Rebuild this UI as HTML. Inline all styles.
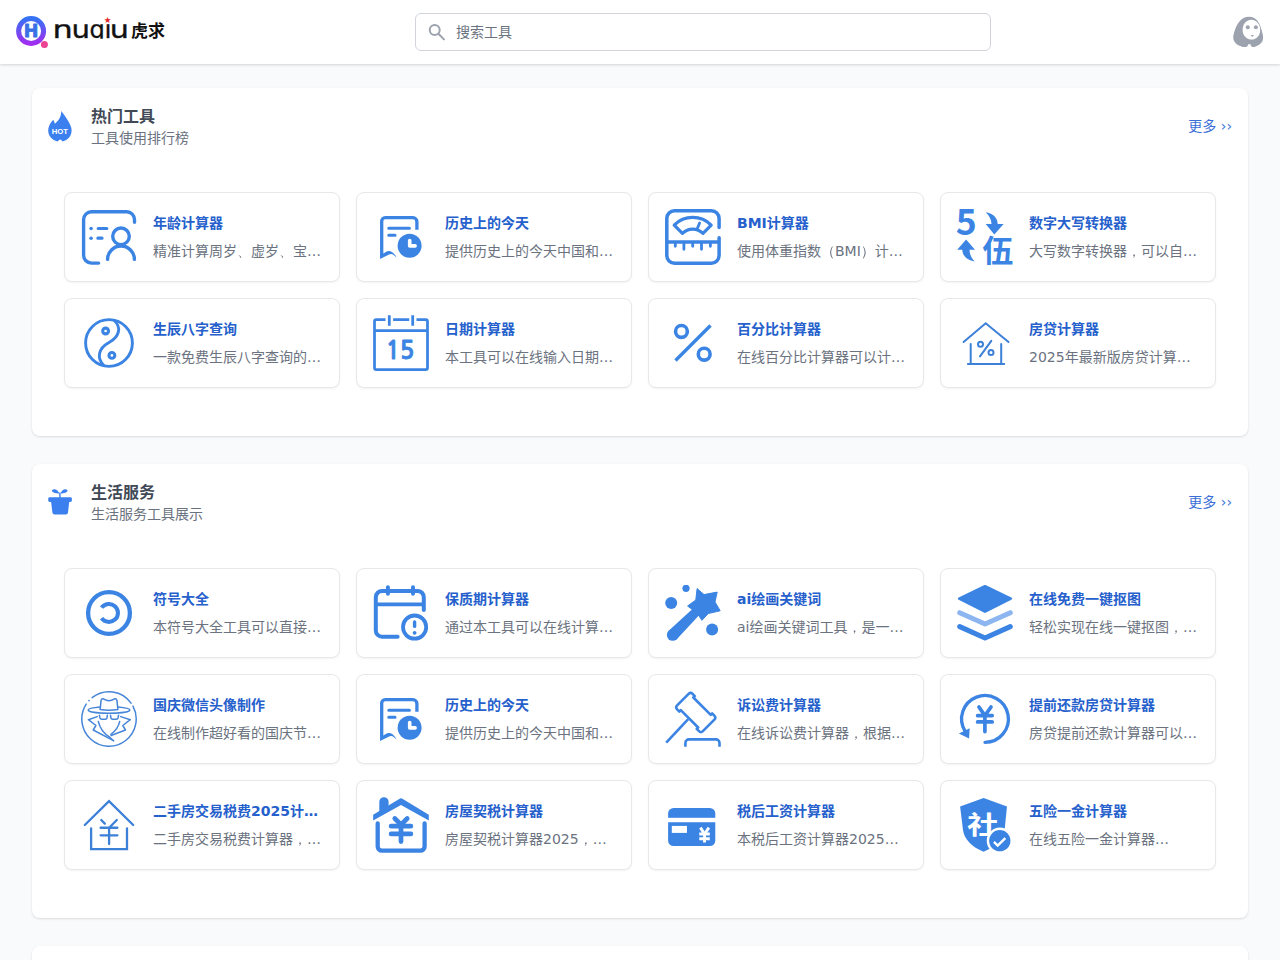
<!DOCTYPE html>
<html lang="zh-CN">
<head>
<meta charset="utf-8">
<title>虎求工具</title>
<style>
*{box-sizing:border-box;margin:0;padding:0}
html,body{width:1280px;height:960px;overflow:hidden}
body{background:#f9fafb;font-family:"DejaVu Sans","Noto Sans CJK SC",sans-serif;font-size:14px;color:#374151;position:relative}
header{position:absolute;left:0;top:0;width:1280px;height:64px;background:#fff;box-shadow:0 1px 3px rgba(0,0,0,.1),0 1px 2px rgba(0,0,0,.06);z-index:5}
.search{position:absolute;left:415px;top:13px;width:576px;height:38px;border:1px solid #d1d5db;border-radius:6px;background:#fff}
.hsvg{position:absolute;left:0;top:0}
.search span{position:absolute;left:40px;top:0;line-height:36px;font-size:14px;color:#6b7280}
.sec{position:absolute;left:32px;width:1216px;background:#fff;border-radius:8px;box-shadow:0 1px 3px rgba(0,0,0,.08),0 1px 2px rgba(0,0,0,.05)}
.hd{position:absolute;left:0;top:0;width:100%;height:76px}
.ov{position:absolute;left:0;top:0;pointer-events:none}
.ht{position:absolute;left:59px;top:16px}
.ht h2{font-size:16px;line-height:24px;font-weight:700;color:#414956;position:relative;top:1px}
.ht p{font-size:14px;line-height:20px;color:#6b7280}
.more{position:absolute;right:16px;top:28px;font-size:14px;line-height:20px;color:#3b6fd6}
.grid{position:absolute;left:32px;top:104px;width:1152px;display:grid;grid-template-columns:repeat(4,276px);gap:16px}
.card{display:block;position:relative;height:90px;border:1px solid #e7e8ea;border-radius:8px;background:#fff;box-shadow:0 1px 2px rgba(0,0,0,.05)}
.card .ic{position:absolute;left:16px;top:16px}
.card .tx{position:absolute;left:88px;top:20px;width:170px}
.card h3{font-size:14px;line-height:20px;font-weight:700;color:#2560cc;white-space:nowrap;overflow:hidden;text-overflow:ellipsis}
.card p{margin-top:8px;font-size:14px;line-height:20px;height:20px;color:#6b7280;white-space:nowrap;overflow:hidden;text-overflow:ellipsis}
.q{font-family:"WenQuanYi Zen Hei","Noto Sans CJK SC",sans-serif}
</style>
</head>
<body>
<header>
<div class="search"><span>搜索工具</span></div>
<svg class="hsvg" width="1280" height="64" viewBox="0 0 1280 64">
<defs>
<linearGradient id="lg" x1="0" y1="0" x2="0" y2="1"><stop offset="0" stop-color="#3572f4"/><stop offset="1" stop-color="#a02df0"/></linearGradient>
<clipPath id="lc"><rect x="50" y="24.2" width="80" height="14.6"/></clipPath>
</defs>
<circle cx="31.1" cy="31" r="12.5" fill="none" stroke="url(#lg)" stroke-width="5"/>
<circle cx="44.4" cy="44.4" r="3.5" fill="#ec4393"/>
<text x="31.0" y="37.3" text-anchor="middle" font-family="DejaVu Sans, sans-serif" font-weight="700" font-size="17.5" fill="#3b6fe6" stroke="#3b6fe6" stroke-width="0.8" stroke-linejoin="round">H</text>
<text clip-path="url(#lc)" y="38.1" font-family="DejaVu Sans, sans-serif" font-size="25.2" fill="#111" stroke="#111" stroke-width="0.35"><tspan x="52.4" textLength="20.29" lengthAdjust="spacingAndGlyphs">h</tspan><tspan x="71.4" textLength="18.53" lengthAdjust="spacingAndGlyphs">u</tspan><tspan x="89.6" textLength="15.36" lengthAdjust="spacingAndGlyphs">q</tspan><tspan x="104.4" textLength="7.01" lengthAdjust="spacingAndGlyphs">i</tspan><tspan x="109.8" textLength="19.17" lengthAdjust="spacingAndGlyphs">u</tspan></text>
<text x="107.7" y="23.2" text-anchor="middle" font-family="DejaVu Sans, sans-serif" font-size="8.6" fill="#e0261c">★</text>
<text x="131" y="37.3" font-family="Noto Sans CJK SC, sans-serif" font-weight="700" font-size="17" fill="#111">虎求</text>
<circle cx="434.7" cy="30.1" r="5" fill="none" stroke="#9ca3af" stroke-width="2"/>
<path d="M438.4 33.8 L444 39.4" stroke="#9ca3af" stroke-width="2" stroke-linecap="round"/>
<path d="M1249 16.8 C1241 16.8 1236.5 24 1234 33 C1231.5 40 1235 45 1243 46.9 C1246.5 47.4 1248 46.5 1248.2 44.2 L1250.6 44.2 C1250.8 46.5 1252 47.4 1254.5 46.9 C1261 45 1264.5 41 1262.6 34 C1260.5 24 1257 16.8 1249 16.8 Z" fill="#9ca3af"/>
<path d="M1251.3 19.8 C1257 19.8 1260.2 25 1260.2 30 C1260.2 35.5 1256.5 39.6 1251.6 39.6 C1246.5 39.6 1242.6 35.5 1242.6 30 C1242.6 25 1245.6 19.8 1251.3 19.8 Z" fill="#fff"/>
<circle cx="1247.8" cy="27.2" r="2" fill="#9ca3af"/><circle cx="1255.9" cy="27.2" r="2" fill="#9ca3af"/>
<path d="M1250.7 35 L1253.9 35 L1252.3 37 Z" fill="#9ca3af"/>
</svg>
</header>
<section class="sec" style="top:88px;height:348px">
<div class="hd"><div class="ht"><h2>热门工具</h2><p>工具使用排行榜</p></div><a class="more">更多 ››</a></div>
<div class="grid">
<a class="card"><svg class="ic" width="56" height="56" viewBox="0 0 56 56"><g fill="none" stroke="#3b84e3" stroke-width="3.4" stroke-linecap="round" stroke-linejoin="round">
<path d="M53.5 13.2 V10.6 A7.8 7.8 0 0 0 45.7 2.8 H10.4 A7.8 7.8 0 0 0 2.6 10.6 V46.3 A7.8 7.8 0 0 0 10.4 54.1 H17.6"/>
<path d="M17.2 19.5 H25.8 M16.9 29.2 H21" stroke-width="3.2"/>
<circle cx="40" cy="27.3" r="8.3"/>
<path d="M26.6 50.4 A13.4 13.4 0 0 1 53.4 50.4"/>
</g><circle cx="10.1" cy="19.5" r="1.8" fill="#3b84e3"/><circle cx="10.1" cy="29.2" r="1.8" fill="#3b84e3"/></svg><div class="tx"><h3>年龄计算器</h3><p>精准计算周岁<span class="q">、</span>虚岁<span class="q">、</span>宝宝月龄</p></div></a>
<a class="card"><svg class="ic" width="56" height="56" viewBox="0 0 56 56"><g fill="none" stroke="#3b84e3" stroke-width="3.3">
<path d="M43.9 20.8 V12.7 A4 4 0 0 0 39.9 8.7 H12.2 A3.5 3.5 0 0 0 8.7 12.2 V45"/>
<path d="M7.05 44 L7.05 49.9 L15.6 45.7 Q18.6 44.3 20.6 45.9 L23.6 48.4 Q21 43.5 17.6 42.3 Q15 41.6 12.8 43 L10.35 44.4 Z" fill="#3b84e3" stroke="none"/>
<path d="M15.8 19.2 H36.4 M15.8 26.3 H22" stroke-width="3.1" stroke-linecap="round"/>
</g>
<circle cx="36.6" cy="36.7" r="12" fill="#3b84e3"/>
<path d="M36.7 31.5 V36.9 H42.1" fill="none" stroke="#fff" stroke-width="3.6" stroke-linecap="round" stroke-linejoin="round"/></svg><div class="tx"><h3>历史上的今天</h3><p>提供历史上的今天中国和世界大事</p></div></a>
<a class="card"><svg class="ic" width="56" height="56" viewBox="0 0 56 56"><g fill="none" stroke="#3b84e3" stroke-width="3.5" stroke-linecap="round" stroke-linejoin="round">
<path d="M54.1 18.6 V9.4 A7.6 7.6 0 0 0 46.5 1.8 H9.4 A7.6 7.6 0 0 0 1.8 9.4 V46.6 A7.6 7.6 0 0 0 9.4 54.2 H46.5 A7.6 7.6 0 0 0 54.1 46.6 V28.8"/>
<path d="M1.8 33 H54.1" stroke-linecap="butt"/>
<path d="M9.2 16.1 A26.2 26.2 0 0 1 46.2 16.1 L38 24.3 A14.6 14.6 0 0 0 17.4 24.3 Z" stroke-width="3.2"/>
<path d="M32 20.3 L34.6 14" stroke-width="2.8"/>
<path d="M10.3 34 V37.3 M27.7 34 V37.3 M45.4 34 V37.3 M18.9 34 V40.3 M36.5 34 V40.3" stroke-width="2.8"/>
</g></svg><div class="tx"><h3>BMI计算器</h3><p>使用体重指数<span class="q">（</span>BMI<span class="q">）</span>计算身体</p></div></a>
<a class="card"><svg class="ic" width="56" height="56" viewBox="0 0 56 56"><text x="-1.3" y="26" font-family="Noto Sans CJK SC, sans-serif" font-weight="700" font-size="35.5" fill="#3b84e3">5</text>
<text x="25.2" y="52.8" font-family="Noto Sans CJK SC, sans-serif" font-weight="700" font-size="31" fill="#3b84e3">伍</text>
<path d="M28.7 3.2 C35 4 40.5 8 40.7 14.9 L46.6 14.9 L37.3 25.6 L28.7 14.9 L34.5 14.9 C34.5 11 32.5 6.5 28.7 3.2 Z" fill="#3b84e3"/>
<path d="M9.1 30.4 L18 40.7 L12.5 40.7 C12.5 45 14.5 49.5 17.7 52.4 C11 51.5 5.5 47.5 5.3 40.7 L0.2 40.7 Z" fill="#3b84e3"/></svg><div class="tx"><h3>数字大写转换器</h3><p>大写数字转换器<span class="q">，</span>可以自动转换</p></div></a>
<a class="card"><svg class="ic" width="56" height="56" viewBox="0 0 56 56"><g fill="none" stroke="#3b84e3" stroke-width="2.9">
<circle cx="28" cy="28" r="23.4"/>
<path d="M33 5.2 C40.5 12 39 21.5 28 27.5 C17 33.5 15.5 43 23 50.8"/>
<circle cx="24.6" cy="16" r="2.9" stroke-width="3.1"/><circle cx="30.9" cy="40.4" r="2.9" stroke-width="3.1"/>
</g></svg><div class="tx"><h3>生辰八字查询</h3><p>一款免费生辰八字查询的工具软件</p></div></a>
<a class="card"><svg class="ic" width="56" height="56" viewBox="0 0 56 56"><g fill="none" stroke="#3b84e3" stroke-width="2.75">
<path d="M12.5 4.6 H3.3 A1.8 1.8 0 0 0 1.5 6.4 V52.7 A1.8 1.8 0 0 0 3.3 54.5 H52.7 A1.8 1.8 0 0 0 54.5 52.7 V6.4 A1.8 1.8 0 0 0 52.7 4.6 H43.5 M20.1 4.6 H36.2"/>
<path d="M1.5 15.6 H54.5 M16.3 0.2 V10.7 M39.7 0.2 V10.7"/>
</g>
<text transform="translate(27.0,44.1) scale(0.98,1)" text-anchor="middle" font-family="NanumGothic, Liberation Sans, sans-serif" font-weight="700" font-size="24" fill="#3b84e3" stroke="#3b84e3" stroke-width="0.85" stroke-linejoin="miter">15</text></svg><div class="tx"><h3>日期计算器</h3><p>本工具可以在线输入日期进行计算</p></div></a>
<a class="card"><svg class="ic" width="56" height="56" viewBox="0 0 56 56"><g fill="none" stroke="#3b84e3" stroke-width="3.6">
<circle cx="16.45" cy="16.45" r="5.9"/><circle cx="39.2" cy="39.2" r="5.9"/>
<path d="M10.5 45.5 L45.5 10.5" stroke-width="3.4"/>
</g></svg><div class="tx"><h3>百分比计算器</h3><p>在线百分比计算器可以计算百分数</p></div></a>
<a class="card"><svg class="ic" width="56" height="56" viewBox="0 0 56 56"><g fill="none" stroke="#3d80d8" stroke-width="2" stroke-linecap="round" stroke-linejoin="miter">
<path d="M6.6 27 L28.7 8.2 L51.5 27"/>
<path d="M13.7 28.9 V49 M44.2 28.9 V49 M10.9 49 H47.2"/>
<circle cx="23.5" cy="29.2" r="2.5"/><circle cx="34" cy="37.6" r="2.5"/>
<path d="M23 41.4 L34.3 25.9"/>
</g></svg><div class="tx"><h3>房贷计算器</h3><p>2025年最新版房贷计算器在线</p></div></a>
</div>
</section>
<section class="sec" style="top:464px;height:454px">
<div class="hd"><div class="ht"><h2>生活服务</h2><p>生活服务工具展示</p></div><a class="more">更多 ››</a></div>
<div class="grid">
<a class="card"><svg class="ic" width="56" height="56" viewBox="0 0 56 56"><g fill="none" stroke="#3b84e3">
<circle cx="28" cy="28" r="20.9" stroke-width="4.3"/>
<path d="M20.6 22.7 A9 9 0 1 1 20.6 33.1" stroke-width="4"/>
</g></svg><div class="tx"><h3>符号大全</h3><p>本符号大全工具可以直接复制使用</p></div></a>
<a class="card"><svg class="ic" width="56" height="56" viewBox="0 0 56 56"><g fill="none" stroke="#3b84e3" stroke-width="4" stroke-linecap="round" stroke-linejoin="round">
<path d="M50.8 25 V12.2 A6.3 6.3 0 0 0 44.5 5.9 H9.1 A6.3 6.3 0 0 0 2.8 12.2 V45.5 A6.3 6.3 0 0 0 9.1 51.8 H24.6"/>
<path d="M2.8 19.4 H50.8" stroke-width="3.8" stroke-linecap="butt"/>
<path d="M14.9 2.2 V8.8 M40 2.2 V8.8"/>
<circle cx="41.6" cy="42.1" r="11.6" stroke-width="3.8"/>
<path d="M41.6 36.9 V41.4" stroke-width="3.4"/>
</g><circle cx="41.6" cy="47.8" r="1.9" fill="#3b84e3"/></svg><div class="tx"><h3>保质期计算器</h3><p>通过本工具可以在线计算保质期限</p></div></a>
<a class="card"><svg class="ic" width="56" height="56" viewBox="0 0 56 56"><g fill="#3b84e3">
<circle cx="21" cy="3.3" r="3.6"/><circle cx="6.2" cy="18" r="6"/><circle cx="47.1" cy="44.6" r="6"/>
<path d="M32.1 3.6 L39 9.6 L52.2 7.1 L50 17 L55.2 25.8 L43.3 28.5 L36.9 35.3 L32.5 28.5 L22.6 21 L30.8 15 Z" stroke="#3b84e3" stroke-width="1" stroke-linejoin="round"/>
<path d="M28.5 23 L35 29.2 L12 54 L3.4 46 Z"/><circle cx="7.7" cy="50" r="5.85"/>
</g></svg><div class="tx"><h3>ai绘画关键词</h3><p>ai绘画关键词工具<span class="q">，</span>是一款免费</p></div></a>
<a class="card"><svg class="ic" width="56" height="56" viewBox="0 0 56 56"><path d="M28 1.2 L53.8 13.56 L28 26.6 L2.2 13.56 Z" fill="#3b84e3" stroke="#3b84e3" stroke-width="2.6" stroke-linejoin="round"/>
<path d="M2.7 27.7 L28 39 L53.3 27.7" fill="none" stroke="#8db6f1" stroke-width="5" stroke-linecap="round" stroke-linejoin="round"/>
<path d="M2.7 41.6 L28 53 L53.3 41.6" fill="none" stroke="#3b84e3" stroke-width="5" stroke-linecap="round" stroke-linejoin="round"/></svg><div class="tx"><h3>在线免费一键抠图</h3><p>轻松实现在线一键抠图<span class="q">，</span>无需下载</p></div></a>
<a class="card"><svg class="ic" width="56" height="56" viewBox="0 0 56 56"><g fill="none" stroke="#4685d8" stroke-width="1.5" stroke-linecap="round" stroke-linejoin="round">
<path d="M11.14 6.65 A27.2 27.2 0 0 1 50.09 12.13"/>
<path d="M51.97 15.15 A27.2 27.2 0 1 1 5.21 13.15"/>
<path d="M19.1 18.6 L20.1 9.2 Q20.6 7.4 22.4 7.8 Q25.5 9.6 28 9.8 Q30.5 9.6 33.6 7.8 Q35.4 7.4 35.9 9.2 L36.9 18.6 Q28 20 19.1 18.6 Z"/>
<path d="M19.1 16 C12 16.6 7.2 17.6 7.2 18.9 C7.2 20.7 16.5 22.2 28 22.2 C39.5 22.2 48.8 20.7 48.8 18.9 C48.8 17.6 44 16.6 36.9 16"/>
<path d="M18.4 24.2 L19 27 Q19.3 28.2 20.6 28.2 L24.4 28.2 Q25.6 28.2 25.9 27 L26.4 24.2 M29.5 24.2 L30 27 Q30.3 28.2 31.5 28.2 L35.4 28.2 Q36.7 28.2 37 27 L37.6 24.2"/>
<path d="M17.3 30.4 C19 38 23.5 43 28.7 46.2 L32.5 49.7 M38.7 30.4 C37.5 36 34 40.5 29.9 43.3"/>
<path d="M16.3 25.6 L7.4 28.7 L14.9 34.5 L12.2 39 L32.5 49.7 M39.7 25.6 L49.3 28.7 L41.8 34.5 L44.5 39 L30.1 44.5"/>
</g><circle cx="7.98" cy="9.59" r="0.85" fill="#4685d8"/></svg><div class="tx"><h3>国庆微信头像制作</h3><p>在线制作超好看的国庆节微信头像</p></div></a>
<a class="card"><svg class="ic" width="56" height="56" viewBox="0 0 56 56"><g fill="none" stroke="#3b84e3" stroke-width="3.3">
<path d="M43.9 20.8 V12.7 A4 4 0 0 0 39.9 8.7 H12.2 A3.5 3.5 0 0 0 8.7 12.2 V45"/>
<path d="M7.05 44 L7.05 49.9 L15.6 45.7 Q18.6 44.3 20.6 45.9 L23.6 48.4 Q21 43.5 17.6 42.3 Q15 41.6 12.8 43 L10.35 44.4 Z" fill="#3b84e3" stroke="none"/>
<path d="M15.8 19.2 H36.4 M15.8 26.3 H22" stroke-width="3.1" stroke-linecap="round"/>
</g>
<circle cx="36.6" cy="36.7" r="12" fill="#3b84e3"/>
<path d="M36.7 31.5 V36.9 H42.1" fill="none" stroke="#fff" stroke-width="3.6" stroke-linecap="round" stroke-linejoin="round"/></svg><div class="tx"><h3>历史上的今天</h3><p>提供历史上的今天中国和世界大事</p></div></a>
<a class="card"><svg class="ic" width="56" height="56" viewBox="0 0 56 56"><g fill="none" stroke="#3b84e3" stroke-width="2.6" stroke-linejoin="round">
<path transform="translate(30.75,21.5) rotate(45)" d="M-15.4 -10.9 H-12.3 V-8.9 H12.3 V-10.9 H15.4 A2.8 2.8 0 0 1 18.2 -8.1 V8.1 A2.8 2.8 0 0 1 15.4 10.9 H12.3 V8.9 H-12.3 V10.9 H-15.4 A2.8 2.8 0 0 1 -18.2 8.1 V-8.1 A2.8 2.8 0 0 1 -15.4 -10.9 Z"/>
<path d="M23.2 28.2 L1.2 51.7"/>
<path d="M20.4 55.8 V52 A3.6 3.6 0 0 1 24 48.4 H50.9 A3.6 3.6 0 0 1 54.5 52 V55.8"/>
</g></svg><div class="tx"><h3>诉讼费计算器</h3><p>在线诉讼费计算器<span class="q">，</span>根据最新标准</p></div></a>
<a class="card"><svg class="ic" width="56" height="56" viewBox="0 0 56 56"><g fill="none" stroke="#3b84e3" stroke-width="3.3" stroke-linecap="round" stroke-linejoin="round">
<path d="M28 51.3 A23.4 23.4 0 1 0 8.16 40.3" />
<path d="M21.95 16 L27.9 24.6 L34 16 M20.6 24.6 H35.2 M20.6 30.9 H35.2 M27.9 24.6 V40.6" stroke-width="3.7"/>
</g><path d="M1.9 42.4 L12.7 37.3 L12.05 47.6 Z" fill="#3b84e3"/></svg><div class="tx"><h3>提前还款房贷计算器</h3><p>房贷提前还款计算器可以帮助您算</p></div></a>
<a class="card"><svg class="ic" width="56" height="56" viewBox="0 0 56 56"><g fill="none" stroke="#3d80d8" stroke-width="2.3" stroke-linecap="round" stroke-linejoin="miter">
<path d="M3.8 28 L28 4.2 L52.2 28"/>
<path d="M10.1 31.3 V52.1 H46 V31.3"/>
<path d="M20.3 23 L23.8 26.6 M35.8 23 L28.7 30.3 M19.6 30.75 H36.4 M19.6 38.3 H36.4 M28.1 30.75 V47"/>
</g></svg><div class="tx"><h3>二手房交易税费2025计算器</h3><p>二手房交易税费计算器<span class="q">，</span>快速计算</p></div></a>
<a class="card"><svg class="ic" width="56" height="56" viewBox="0 0 56 56"><path d="M0.16 17.7 L26.2 1.9 Q28 0.8 29.8 1.9 L55.8 17.7 L55.8 23.5 L28 8.06 L0.16 23.5 Z" fill="#3b84e3"/>
<path d="M6.3 16 V4.8 A4.65 4.65 0 0 1 15.6 4.8 V12 Z" fill="#3b84e3"/>
<g fill="none" stroke="#3b84e3" stroke-width="4.3" stroke-linecap="round" stroke-linejoin="round">
<path d="M4.7 26.4 V49.5 A4.2 4.2 0 0 0 8.9 53.7 H47.4 A4.2 4.2 0 0 0 51.6 49.5 V26.4"/>
<path d="M21.8 21.5 L28 27.6 L34.2 21.5 M18.1 29.2 H37.9 M18.1 36.9 H37.9 M28 28 V44.6" stroke-width="4.7"/>
</g></svg><div class="tx"><h3>房屋契税计算器</h3><p>房屋契税计算器2025<span class="q">，</span>在线计算</p></div></a>
<a class="card"><svg class="ic" width="56" height="56" viewBox="0 0 56 56"><rect x="3.1" y="10.95" width="47.2" height="38.05" rx="5.5" fill="#3b84e3"/>
<rect x="2" y="20.8" width="50" height="4.45" fill="#fff"/>
<rect x="6.8" y="28.9" width="15.15" height="7" fill="#fff"/>
<path d="M35.4 30.6 L39.55 37 L43.9 30.6 M34.3 37 H44.8 M34.3 41.75 H44.8 M39.55 37 V45.4" fill="none" stroke="#fff" stroke-width="2.9" stroke-linejoin="miter"/></svg><div class="tx"><h3>税后工资计算器</h3><p>本税后工资计算器2025年最新版</p></div></a>
<a class="card"><svg class="ic" width="56" height="56" viewBox="0 0 56 56"><path d="M26.6 1 L50 9.4 L47.6 33 C46.5 42 38 50 26.6 54.8 C15 50 7 42 6 33 L3.1 9.4 Z" fill="#3b84e3"/>
<text transform="translate(25.8,36.8) scale(1.08,0.88)" text-anchor="middle" font-family="Noto Sans CJK SC, sans-serif" font-weight="700" font-size="29" fill="#fff">社</text>
<circle cx="42.8" cy="43.7" r="13.1" fill="#fff"/><circle cx="42.8" cy="43.7" r="10.65" fill="#3b84e3"/>
<path d="M36.9 44.85 L40.7 48.6 L48.3 41.1" fill="none" stroke="#fff" stroke-width="2.4"/></svg><div class="tx"><h3>五险一金计算器</h3><p>在线五险一金计算器…</p></div></a>
</div>
</section>
<section class="sec" style="top:946px;height:200px"></section>
<svg class="ov" width="1280" height="960" viewBox="0 0 1280 960"><path d="M61.2 110.9 C63 113 66 117 67.5 120 C70 124 71.6 127 71.6 130.2 C71.6 136 68 140 62.5 141.4 C62 140.5 61 139.7 60.2 139.5 C59.5 139.7 58.5 140.5 57.6 141.4 C52 140 48.2 136 48.2 130.5 C48.2 127 50 123 53.3 119.8 C54 121 54.5 122 54.7 123.7 C58 121 61.5 117 61.2 110.9 Z" fill="#3b80ee"/>
<text x="59.9" y="133.8" text-anchor="middle" font-family="Liberation Sans, sans-serif" font-weight="700" font-size="7.7" fill="#fff">HOT</text><g fill="#3b80ee"><rect x="48.25" y="497.2" width="23.6" height="4.7" rx="1.4"/>
<path d="M51 501 L69.3 501 L68 512.6 Q67.8 514.6 65.8 514.6 L54.6 514.6 Q52.6 514.6 52.4 512.6 Z"/>
<path d="M59.3 498 V493.5 C58.5 490.5 54.5 487.8 52 490.2 C51.5 492.5 56 493.5 59.3 493.5 Z M60.5 498 V493.5 C61.3 490.5 65 487.8 67.5 490.2 C68 492.5 63.5 493.5 60.5 493.5 Z"/>
<rect x="59.2" y="492.5" width="1.4" height="5.5"/></g></svg>
</body>
</html>
